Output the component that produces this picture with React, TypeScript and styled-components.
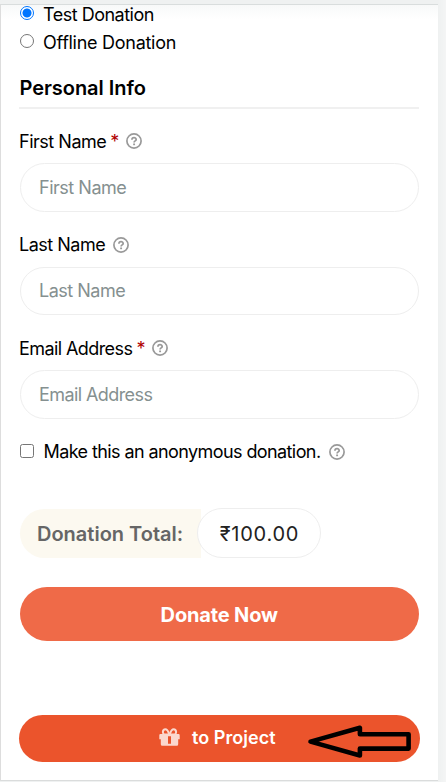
import React from 'react';
import styled, { createGlobalStyle } from 'styled-components';

const GlobalStyle = createGlobalStyle`
  * { box-sizing: border-box; }
  body {
    margin: 0;
    background: #f1f3f3;
    font-family: Inter, "Liberation Sans", sans-serif;
    font-size: 18px;
    color: #000;
    overflow: hidden;
  }
`;

const Page = styled.main`
  height: 782px;
  padding: 4px 8px 1px 0;
  background: linear-gradient(90deg, #eff1f1 438px, #f0f2f2 440px, #f4f5f5 446px);
`;

const Card = styled.form`
  height: 777px;
  padding: 0 19px 0 18.5px;
  border-top: 1px solid #d9dddd;
  border-left: 1px solid #dddddd;
  border-bottom: 1px solid #dadcdc;
  background: linear-gradient(#f8f9f9, #fff 14px);
  display: flex;
  flex-direction: column;
`;

const Gateways = styled.div`
  display: grid;
  gap: 9px;
`;

const Option = styled.label<{ $height?: number }>`
  height: ${p => p.$height ?? 19}px;
  display: flex;
  align-items: center;
  white-space: nowrap;
`;

const Radio = styled.input.attrs({ type: 'radio' })`
  appearance: none;
  width: 14px;
  height: 14px;
  margin: 0 9.5px 3px 0;
  border: 1px solid #767676;
  border-radius: 50%;
  background: #fff;
  &:checked {
    border-color: #0075ff;
    background: radial-gradient(circle, #0075ff 4.1px, #fff 4.9px);
  }
`;

const Checkbox = styled.input.attrs({ type: 'checkbox' })`
  appearance: none;
  width: 14px;
  height: 14px;
  margin: 0 10px 2px 0;
  border: 1px solid #767676;
  border-radius: 2.5px;
  background: #fff;
`;

const Text = styled.span<{ $track: number }>`
  letter-spacing: ${p => p.$track}px;
`;

const Heading = styled.h2`
  margin: 24px 0 22px -0.5px;
  padding: 0 0 7px 0.5px;
  border-bottom: 2px solid #f0f0f0;
  font-size: 20px;
  line-height: 24px;
  font-weight: 600;
  letter-spacing: -0.05px;
`;

const Field = styled.div`
  display: grid;
  gap: 12px;
  margin-bottom: 23px;
`;

const Label = styled.label`
  height: 20px;
  display: flex;
  align-items: center;
  margin-left: -0.5px;
`;

const Required = styled.span`
  margin-left: 4px;
  color: #b00000;
`;

const Input = styled.input<{ $track: number }>`
  width: 399px;
  height: 48.5px;
  padding: 0 18.5px 0.5px;
  border: 1px solid #eeeeee;
  border-radius: 25px;
  background: #fff;
  font: inherit;
  letter-spacing: ${p => p.$track}px;
  &::placeholder { color: #859090; opacity: 1; }
`;

const HelpSvg = styled.svg<{ $gap: number }>`
  flex: none;
  width: 16px;
  height: 16px;
  margin-left: ${p => p.$gap}px;
`;

const Total = styled.div`
  display: flex;
  height: 50px;
  margin-top: 46.5px;
`;

const TotalLabel = styled.span`
  width: 181.5px;
  height: 49px;
  margin-top: 1px;
  padding: 1px 0 0 17.5px;
  border-radius: 25px 0 0 25px;
  background: #fcf9f0;
  color: #666;
  font-size: 20px;
  font-weight: 600;
  line-height: 49px;
  white-space: nowrap;
`;

const Amount = styled.span`
  width: 124px;
  height: 50px;
  margin-left: -4px;
  padding: 1px 0 0 1px;
  border: 1px solid #eeeeee;
  border-radius: 25px;
  background: #fff;
  color: #222;
  font-size: 20px;
  letter-spacing: 0.75px;
  line-height: 49px;
  text-align: center;
`;

const DonateButton = styled.button`
  flex: none;
  width: 399.5px;
  height: 54px;
  margin: 29px 0 0;
  padding: 2px 0 0;
  border: 0;
  border-radius: 27px;
  background: #ef6a48;
  color: #fff;
  font: 700 20px Inter, sans-serif;
  letter-spacing: -0.15px;
`;

const ProjectButton = styled.button`
  flex: none;
  display: flex;
  align-items: center;
  width: 401px;
  height: 47.5px;
  margin: 73.5px 0 0 -1px;
  padding: 0 8px 0 140.5px;
  border: 0;
  border-radius: 24px;
  background: #eb542c;
  color: #fff;
  font: 600 18px Inter, sans-serif;
  letter-spacing: 0.05px;
`;

const ProjectText = styled.span`
  margin-bottom: 2px;
`;

const GiftSvg = styled.svg`
  width: 21px;
  height: 18px;
  margin: 0 12px 2px 0;
`;

const ArrowSvg = styled.svg`
  width: 106px;
  height: 36px;
  margin: 7px 0 0 auto;
`;

function HelpIcon({ gap }: { gap: number }) {
  return (
    <HelpSvg $gap={gap} viewBox="0 0 16 16" fill="none" stroke="#999">
      <circle cx="8" cy="8" r="7.1" strokeWidth="1.7" />
      <path d="M5.9 6.7C5.9 3.9 10.2 4.1 10.2 6.5C10.2 8 8.1 7.8 8.1 9.4" strokeWidth="1.7" />
      <path d="M8.1 10.5V12.2" strokeWidth="1.9" />
    </HelpSvg>
  );
}

function GiftIcon() {
  return (
    <GiftSvg viewBox="0 0 21 18">
      <g fill="none" stroke="#fbd8ce" strokeWidth="2">
        <path d="M10.5 6.6H6C3.1 6.6 3.2 1.2 6.4 1.2C8.8 1.2 9.4 4 10.5 6.6Z" />
        <path d="M10.5 6.6H15C17.9 6.6 17.8 1.2 14.6 1.2C12.2 1.2 11.6 4 10.5 6.6Z" />
      </g>
      <path fill="#fbd8ce" fillRule="evenodd" d="M1.5 6H19.5Q20.7 6 20.7 7.2V11.3H19.2V16.2Q19.2 17.8 17.7 17.8H3.3Q1.8 17.8 1.8 16.2V11.3H.3V7.2Q.3 6 1.5 6ZM9 8.2V15.7H12V8.2Z" />
    </GiftSvg>
  );
}

function ArrowIcon() {
  return (
    <ArrowSvg viewBox="306 724 106 36" fill="none" stroke="#000" strokeWidth="4.6">
      <path d="M310.5 741.6L359.9 727.8V734.3H408.6V748.6H359.9V755.5Z" strokeLinejoin="round" />
    </ArrowSvg>
  );
}

type FieldData = { name: string; required: boolean; track: number };

const fields: FieldData[] = [
  { name: 'First Name', required: true, track: -0.48 },
  { name: 'Last Name', required: false, track: -0.5 },
  { name: 'Email Address', required: true, track: -0.58 },
];

export default function App() {
  return (
    <>
      <GlobalStyle />
      <Page>
        <Card>
          <Gateways>
            <Option><Radio name="gateway" defaultChecked /><Text $track={-0.5}>Test Donation</Text></Option>
            <Option><Radio name="gateway" /><Text $track={-0.28}>Offline Donation</Text></Option>
          </Gateways>
          <Heading>Personal Info</Heading>
          {fields.map(f => (
            <Field key={f.name}>
              <Label>
                <Text $track={f.track}>{f.name}</Text>
                {f.required && <Required>*</Required>}
                <HelpIcon gap={f.required ? 7 : 8} />
              </Label>
              <Input placeholder={f.name} $track={f.track} />
            </Field>
          ))}
          <Option $height={20}>
            <Checkbox />
            <Text $track={-0.59}>Make this an anonymous donation.</Text>
            <HelpIcon gap={8} />
          </Option>
          <Total>
            <TotalLabel>Donation Total:</TotalLabel>
            <Amount>₹100.00</Amount>
          </Total>
          <DonateButton type="button">Donate Now</DonateButton>
          <ProjectButton type="button">
            <GiftIcon />
            <ProjectText>to Project</ProjectText>
            <ArrowIcon />
          </ProjectButton>
        </Card>
      </Page>
    </>
  );
}
